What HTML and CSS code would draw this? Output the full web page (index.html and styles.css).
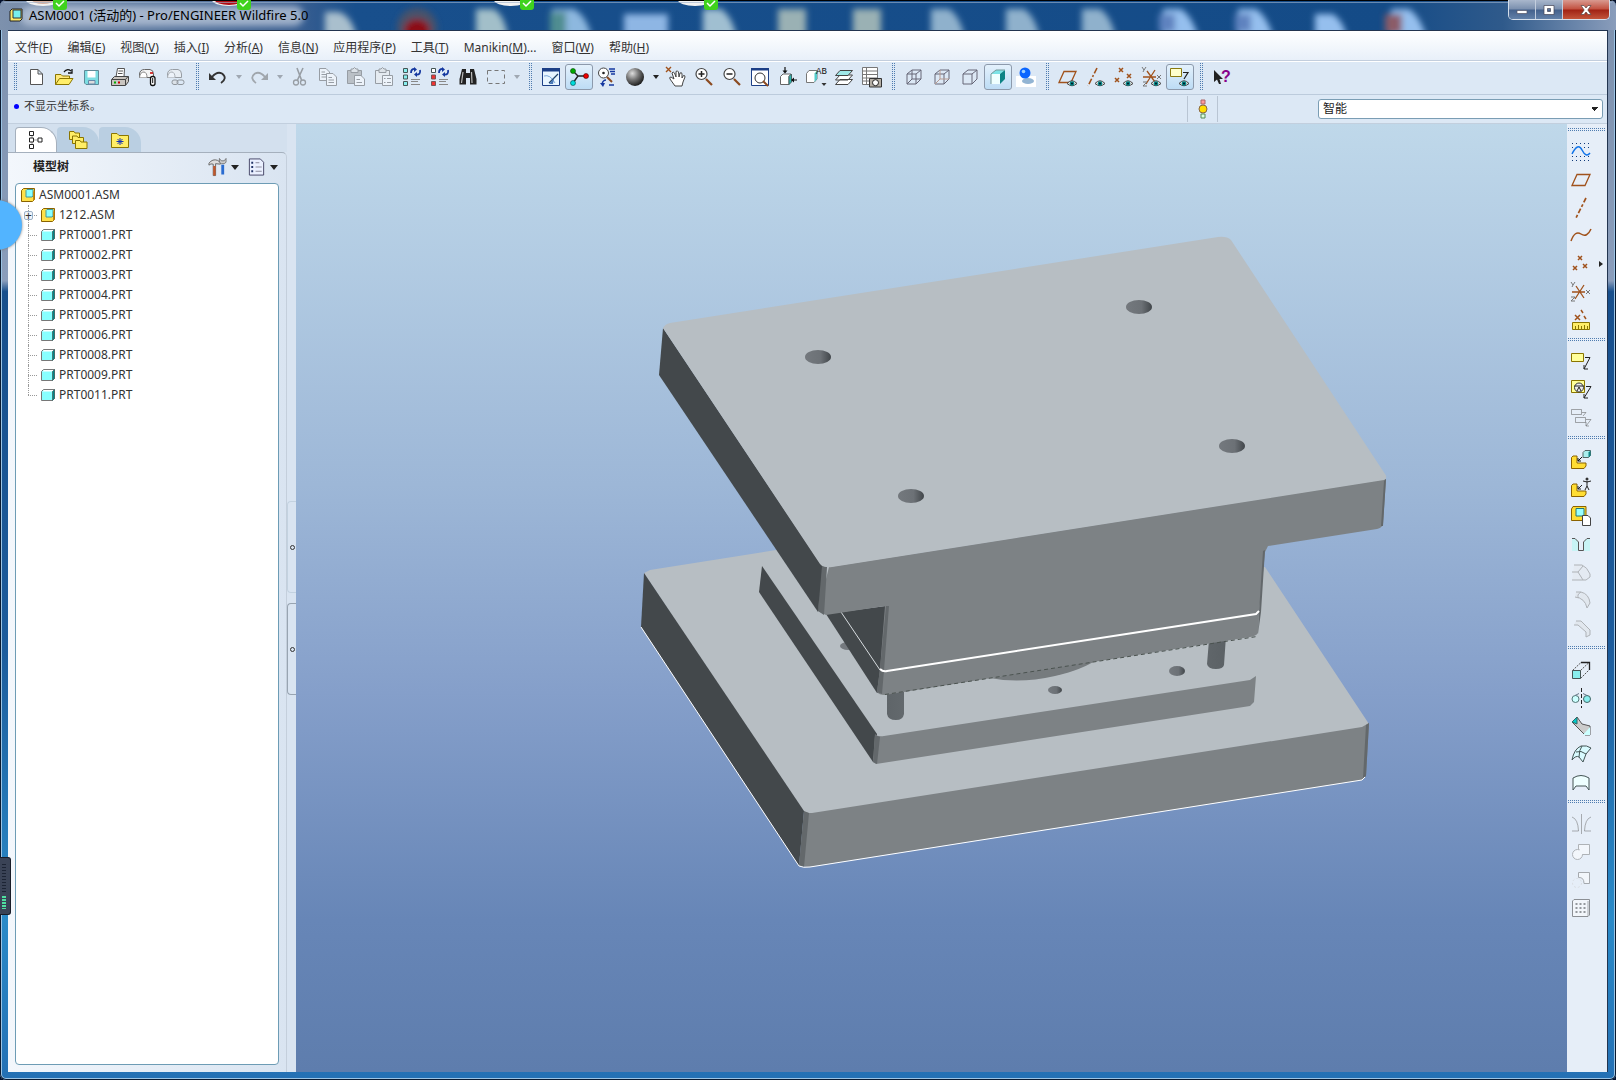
FILE: index.html
```html
<!DOCTYPE html>
<html lang="zh-CN">
<head>
<meta charset="utf-8">
<title>ASM0001 (活动的) - Pro/ENGINEER Wildfire 5.0</title>
<link rel="stylesheet" href="styles.css">
</head>
<body>
<svg class="defs" aria-hidden="true">
  <defs>
    <symbol id="part" viewBox="0 0 14 14"><path d="M.5 3.500 2.500 1.500H13.500V10.500L11.500 12.500H.5z" fill="#8ff" stroke="#777"/><path d="M1.500 3.500 3 2H13L11.500 3.500z" fill="#fff"/><path d="M11.500 3.500 13.500 1.500V10.500L11.500 12.500z" fill="#088" stroke="#466" stroke-width=".8"/></symbol>
    <symbol id="asm" viewBox="0 0 14 14"><path d="M.5 2.500 2.500 .5H13.500V11.500L11.500 13.500H.5z" fill="#ffe14a" stroke="#8a6200"/><path d="M5 2.500 6 1.500H12V8L11 9H5z" fill="#8ff" stroke="#499"/><path d="M12 13V4l1.500-2v9.500z" fill="#c88a10"/></symbol>
    <symbol id="eye" viewBox="0 0 10 7"><path d="M0 3.500Q5-2 10 3.500Q5 8 0 3.500z" fill="#ddd" stroke="#444"/><circle cx="5" cy="3.500" r="2.300" fill="#088"/><circle cx="5" cy="3.500" r="1" fill="#012"/></symbol>
    <symbol id="check" viewBox="0 0 14 12"><path d="M0 0H14V9Q14 12 11 12H3Q0 12 0 9z" fill="#3fd21d"/><path d="M3 5 6 8 11 3" fill="none" stroke="#fff" stroke-width="1.500"/></symbol>
    <symbol id="cube" viewBox="0 0 20 20"><path d="M3 7 8 3H17V12L12 17H3z" fill="none" stroke="#667"/></symbol>
  </defs>
</svg>

<div class="window">
  <header class="titlebar">
    <svg class="glass" aria-hidden="true" viewBox="0 0 1616 31" preserveAspectRatio="xMinYMin slice">
      <defs>
        <filter id="soft" x="-30%" y="-50%" width="160%" height="200%"><feGaussianBlur stdDeviation="3"/></filter>
        <linearGradient id="bar" x1="0" x2="1"><stop offset="0" stop-color="#7d91ad"/><stop offset=".18" stop-color="#3d6091"/><stop offset=".22" stop-color="#184f8c"/><stop offset=".86" stop-color="#144b87"/><stop offset=".93" stop-color="#2f5a8b"/><stop offset="1" stop-color="#8a9dbb"/></linearGradient>
      </defs>
      <rect width="1616" height="31" fill="url(#bar)"/>
      <g filter="url(#soft)">
        <rect x="20" y="6" width="284" height="20" rx="10" fill="#b6c4d8" opacity=".8"/>
        <path d="M325 40V12h14q14 5 18 28z" fill="#a9bfcd"/>
        <circle cx="417" cy="28" r="20" fill="#4a526a"/><ellipse cx="417" cy="30" rx="13" ry="11" fill="#8c0c16"/>
        <path d="M476 40V9h18q12 8 14 31z" fill="#a2bfc9"/>
        <path d="M552 40V9h22q14 8 18 31z" fill="#8db8df"/><path d="M550 40V12h16v28z" fill="#4f8d91"/>
        <path d="M624 14h44v26h-44z" fill="#8eb6e4"/>
        <path d="M703 40V9h18q12 8 16 31z" fill="#a0bfd1"/>
        <path d="M778 9h28v31h-28zM853 9h28v31h-28z" fill="#9ab1b4"/>
        <path d="M931 40V9h18q12 8 16 31zM1006 40V9h18q12 8 16 31zM1082 40V9h18q12 8 16 31z" fill="#8fb1cc"/>
        <path d="M1163 40V9h18q12 8 18 31zM1238 40V9h18q12 8 18 31zM1315 40V14h18q12 8 14 26zM1391 40V9h18q12 8 18 31z" fill="#95bfee"/>
        <path d="M1159 14h16v18h-16zM1235 14h16v18h-16z" fill="#5e83c0"/><path d="M1385 14h17v20h-17z" fill="#8b5c68"/>
      </g>
      <path d="M26 0a17 6 0 0 0 34 0zM212 0a17 6 0 0 0 34 0zM494 0a17 6 0 0 0 34 0zM678 0a17 6 0 0 0 34 0z" fill="#f2f2f2"/>
      <path d="M32 0a11 4 0 0 0 22 0z" fill="#d8b2a2"/><path d="M215 0a14 5 0 0 0 28 0z" fill="#b00b14"/>
      <path d="M0 .5H1616" stroke="#000"/><path d="M4 2.500H1612" stroke="#9fb4cf" opacity=".6"/>
      <use href="#check" x="53" y="-2" width="14" height="12"/><use href="#check" x="237" y="-2" width="14" height="12"/><use href="#check" x="520" y="-2" width="14" height="12"/><use href="#check" x="704" y="-2" width="14" height="12"/>
    </svg>
    <svg class="app-icon" viewBox="0 0 14 14" aria-hidden="true"><path d="M1 3 3 1H13V11L11 13H1z" fill="#ffe96a" stroke="#222"/><path d="M4 2H12V10H4z" fill="#7ee" stroke="#333"/></svg>
    <h1>ASM0001 (活动的) - Pro/ENGINEER Wildfire 5.0</h1>
    <div class="win-buttons">
      <button aria-label="最小化"><svg viewBox="0 0 20 14"><path d="M5 7.500H15V10.500H5z" fill="#fff" stroke="#556" stroke-width=".7"/></svg></button>
      <button aria-label="最大化"><svg viewBox="0 0 20 14"><path d="M5 2.500H15V11.500H5zM8.500 5.500V8.500H11.500V5.500z" fill="#fff" fill-rule="evenodd" stroke="#445" stroke-width=".7"/></svg></button>
      <button class="close" aria-label="关闭"><svg viewBox="0 0 20 14"><path d="M5 2.500H8L10 5 12 2.500H15L11.800 7 15 11.500H12L10 9 8 11.500H5L8.200 7z" fill="#fff" stroke="#544" stroke-width=".7"/></svg></button>
    </div>
  </header>

  <div class="client">
    <nav class="menubar">
      <button>文件(<u>F</u>)</button><button>编辑(<u>E</u>)</button><button>视图(<u>V</u>)</button><button>插入(<u>I</u>)</button><button>分析(<u>A</u>)</button><button>信息(<u>N</u>)</button><button>应用程序(<u>P</u>)</button><button>工具(<u>T</u>)</button><button>Manikin(<u>M</u>)...</button><button>窗口(<u>W</u>)</button><button>帮助(<u>H</u>)</button>
    </nav>

    <div class="toolbar" role="toolbar">
      <span class="grip"></span>
      <button aria-label="新建"><svg viewBox="0 0 20 20"><path d="M4.500 2.500H12L16.500 7V17.500H4.500zM12 2.500V7H16.500" fill="#fff" stroke="#555"/></svg></button>
      <button aria-label="打开"><svg viewBox="0 0 20 20"><path d="M1.500 17.500V7.500H7L8.500 9H15.500V11" fill="#ffe97a" stroke="#8a7500"/><path d="M1.500 17.500 5.500 11.500H19L15 17.500z" fill="#ffee6a" stroke="#8a7500"/><path d="M10 5Q13 1 17 4M18 2V6H14" fill="none" stroke="#111" stroke-width="1.300"/></svg></button>
      <button aria-label="保存"><svg viewBox="0 0 20 20"><path d="M2.500 3.500H16.500V17.500H4L2.500 16z" fill="#7cdde2" stroke="#5e8b98"/><path d="M5.500 4H13.500V10.500H5.500z" fill="#fff"/><path d="M6.500 13.500H13V17H6.500z" fill="#ddd" stroke="#68a"/></svg></button>
      <button aria-label="打印"><svg viewBox="0 0 20 20"><path d="M6 10 7.500 1.500H14.500L14 10z" fill="#fff" stroke="#555"/><path d="M8.500 4H13M8 6.500H12.500" stroke="#555"/><path d="M1.500 12.500 4.500 9.500H18.500V14.500L15.500 18.500H1.500z" fill="#c9c5c0" stroke="#444"/><path d="M2 12.500H15.500L18 9.500M15.500 12.500V18" fill="none" stroke="#444"/><path d="M4 15.500H6" stroke="#0a0" stroke-width="2"/><path d="M8 15.500H10" stroke="#c00" stroke-width="2"/></svg></button>
      <button aria-label="发送邮件"><svg viewBox="0 0 20 20"><path d="M1.500 10.500V7Q2 2.500 6.500 2.500H12Q15.500 3 15.500 7V10.500z" fill="#f4f4f4" stroke="#666"/><path d="M1.500 10.500Q2 5 6 5Q9 5.500 9 10.500" fill="#fff" stroke="#888"/><path d="M12 6H15" stroke="#c00" stroke-width="1.500"/><rect x="12.500" y="9.500" width="4.500" height="9" rx="2" fill="#fff" stroke="#111" stroke-width="1.300"/><path d="M14.700 11V16" stroke="#111"/></svg></button>
      <button class="off" aria-label="发送链接"><svg viewBox="0 0 20 20"><path d="M1.500 10.500V7Q2 2.500 6.500 2.500H12Q15.500 3 15.500 7V10.500z" fill="#f4f4f4" stroke="#555"/><path d="M1.500 10.500Q2 5 6 5Q9 5.500 9 10.500" fill="#fff" stroke="#777"/><rect x="6" y="13" width="6" height="4.500" rx="2" fill="#ddd" stroke="#444"/><rect x="11" y="13" width="7" height="4.500" rx="2" fill="none" stroke="#444"/></svg></button>
      <span class="grip"></span>
      <button aria-label="撤消"><svg viewBox="0 0 20 20"><path d="M4 10Q9 4 14 6.500Q20 11 13 16" fill="none" stroke="#333" stroke-width="1.800"/><path d="M1 6V13H8z" fill="#333"/></svg></button><button class="arrow off" aria-label="撤消列表"></button>
      <button class="off" aria-label="重做"><svg viewBox="0 0 20 20"><path d="M16 10Q11 4 6 6.500Q0 11 7 16" fill="none" stroke="#666" stroke-width="1.800"/><path d="M19 6V13H12z" fill="#666"/></svg></button><button class="arrow off" aria-label="重做列表"></button>
      <button class="off" aria-label="剪切"><svg viewBox="0 0 20 20"><path d="M7 1 11.500 13M13 1 7.500 13" stroke="#555" stroke-width="1.600"/><circle cx="6" cy="15.500" r="2.500" fill="none" stroke="#555" stroke-width="1.300"/><circle cx="13" cy="15.500" r="2.500" fill="none" stroke="#555" stroke-width="1.300"/></svg></button>
      <button class="off" aria-label="复制"><svg viewBox="0 0 20 20"><path d="M1.500 1.500H8L11.500 5V13.500H1.500zM3.500 5H7M3.500 7.500H9M3.500 10H9" fill="#fff" stroke="#555"/><path d="M8.500 6.500H15L18.500 10V18.500H8.500zM10.500 10.500H14M10.500 13H16M10.500 15.500H16" fill="#fff" stroke="#555"/></svg></button>
      <button class="off" aria-label="粘贴"><svg viewBox="0 0 20 20"><path d="M1.500 3.500H15.500V16.500H1.500z" fill="#999" stroke="#555"/><path d="M5 2H7Q8.500-1 10 2H12V5.500H5z" fill="#ddd" stroke="#555"/><path d="M8.500 8.500H15L18.500 12V18.500H8.500zM10.500 12.500H14M10.500 15.500H16" fill="#fff" stroke="#555"/></svg></button>
      <button class="off" aria-label="选择性粘贴"><svg viewBox="0 0 20 20"><path d="M1.500 3.500H15.500V16.500H1.500z" fill="#eee" stroke="#555"/><path d="M5 2H7Q8.500-1 10 2H12V5.500H5z" fill="#ddd" stroke="#555"/><path d="M8.500 8.500H18.500V18.500H8.500zM13 11.500H17M13 15.500H17M10 11.500H11.500M10 15.500H11.500" fill="#fff" stroke="#555"/></svg></button>
      <button aria-label="再生"><svg viewBox="0 0 20 20"><path d="M1.500 1.500H5.500V5.500H1.500zM1.500 8H5.500V12H1.500zM1.500 14.500H5.500V18.500H1.500z" fill="#8ee" stroke="#455"/><path d="M9 6Q9 1.500 13 2M18 3Q19 8 14 7.500" fill="none" stroke="#1538a0" stroke-width="1.800"/><path d="M12 0 15 2.500 12 5zM15 5 12 7.500 15 10z" fill="#1538a0"/><path d="M9 12.500H18M9 14.500H16M9 17.500H18" stroke="#888"/></svg></button>
      <button aria-label="再生管理器"><svg viewBox="0 0 20 20"><path d="M1.500 1.500H5.500V5.500H1.500z" fill="#fff" stroke="#455"/><path d="M1.500 8H5.500V12H1.500zM1.500 14.500H5.500V18.500H1.500z" fill="#e33" stroke="#755"/><path d="M9 6Q9 1.500 13 2M18 3Q19 8 14 7.500" fill="none" stroke="#1538a0" stroke-width="1.800"/><path d="M12 0 15 2.500 12 5zM15 5 12 7.500 15 10z" fill="#1538a0"/><path d="M9 12.500H18M9 14.500H16M9 17.500H18" stroke="#888"/></svg></button>
      <button aria-label="查找"><svg viewBox="0 0 20 20"><path d="M4 2H8V6H12V2H16L18.500 12V17.500H12V11H8V17.500H1.500V12z" fill="#222"/><path d="M5 5 3.500 16M13.500 5 14 16" stroke="#bbb" stroke-width="1.200"/></svg></button>
      <button aria-label="选取框"><svg viewBox="0 0 20 20"><path d="M1.500 3.500H18.500V16.500H1.500z" fill="none" stroke="#777" stroke-dasharray="4 3"/></svg></button><button class="arrow off" aria-label="选取框列表"></button>
      <span class="grip"></span>
      <button aria-label="重画"><svg viewBox="0 0 20 20"><path d="M1.500 1.500H18.500V18.500H1.500z" fill="#e8f5ff" stroke="#1c3f86"/><path d="M1 1H19V4.500H1z" fill="#1c3f86"/><path d="M3 9Q9 7 14 16" fill="none" stroke="#7aa6d8"/><path d="M8 16 17 7" stroke="#246" stroke-width="1.200"/><path d="M13 11 8 17H12z" fill="#4878b8"/></svg></button>
      <button class="on" aria-label="旋转中心"><svg viewBox="0 0 20 20"><path d="M4 4 9 9H17M9 9 4 16" fill="none" stroke="#222" stroke-width="1.400"/><circle cx="4" cy="4" r="2.500" fill="#0a0" stroke="#040" stroke-width=".6"/><circle cx="17" cy="9" r="2.500" fill="#e00" stroke="#400" stroke-width=".6"/><circle cx="4" cy="16" r="2.500" fill="#0dd" stroke="#044" stroke-width=".6"/></svg></button>
      <button aria-label="定向模式"><svg viewBox="0 0 20 20"><circle cx="6.500" cy="6" r="5" fill="#fff" stroke="#444"/><circle cx="6.500" cy="6" r="1.300" fill="#222"/><path d="M10 10 15 15" stroke="#8b4a20" stroke-width="2"/><path d="M12 2H18M13 4.500H18M14 7H18M5 17Q6 13 9 13M12 18H17" stroke="#1538a0" stroke-width="1.400" fill="none"/><path d="M3 16H8L6 20z" fill="#1538a0"/></svg></button>
      <button aria-label="外观库"><svg viewBox="0 0 20 20"><defs><radialGradient id="ball" cx=".35" cy=".3" r=".7"><stop offset="0" stop-color="#ddd"/><stop offset=".5" stop-color="#777"/><stop offset="1" stop-color="#222"/></radialGradient></defs><circle cx="10" cy="10" r="9" fill="url(#ball)"/></svg></button><button class="arrow" aria-label="外观列表"></button>
      <button aria-label="平移"><svg viewBox="0 0 20 20"><path d="M0 0 5 5M5 0 0 5" stroke="#a0521c" stroke-width="1.400"/><path d="M9 19 4 12Q3 10 5 10L8 12 6 6Q7 4 8.500 6L10 10 10 4.500Q11.500 3 12.500 5L13 10 14 6Q16 5 16 7V11L17.500 8.500Q19 8 19 10L17 15 16 19z" fill="#fff" stroke="#444"/></svg></button>
      <button aria-label="放大"><svg viewBox="0 0 20 20"><circle cx="7.500" cy="7" r="5.500" fill="#fff" stroke="#444" stroke-width="1.200"/><path d="M12 12 18 18" stroke="#8b4a20" stroke-width="2.200"/><path d="M4.500 7H10.500M7.500 4V10" stroke="#222" stroke-width="1.500"/></svg></button>
      <button aria-label="缩小"><svg viewBox="0 0 20 20"><circle cx="7.500" cy="7" r="5.500" fill="#fff" stroke="#444" stroke-width="1.200"/><path d="M12 12 18 18" stroke="#8b4a20" stroke-width="2.200"/><path d="M4.500 7H10.500" stroke="#222" stroke-width="1.500"/></svg></button>
      <button aria-label="重新调整"><svg viewBox="0 0 20 20"><path d="M1.500 1.500H18.500V18.500H1.500z" fill="#fff" stroke="#1c3f86"/><path d="M1 1H19V3.500H1z" fill="#1c3f86"/><circle cx="10" cy="11" r="5" fill="#fff" stroke="#333"/><path d="M13 14 18 19" stroke="#8b4a20" stroke-width="2"/></svg></button>
      <button aria-label="重定向"><svg viewBox="0 0 20 20"><path d="M2.500 9.500 5 7H13L11 9.500V17.500H2.500z" fill="#fff" stroke="#666"/><path d="M11 9.500 13.500 7V15L11 17.500z" fill="#2bb5ae" stroke="#466"/><path d="M7 0V5M19 13H14" stroke="#111" stroke-width="1.200"/><path d="M4.500 3.500H9.500L7 6.500zM16 10.500V15.500L13 13z" fill="#111"/></svg></button>
      <button aria-label="已保存视图"><svg viewBox="0 0 20 20"><path d="M.5 6.500 3 3.500H11V12L8 15.500H.5z" fill="#fff" stroke="#777"/><path d="M8.500 6.500 11 3.500V12L8.500 15z" fill="#5cc"/><path d="M15.500 16H20.500L18 19z" fill="#333"/><text x="10" y="7" class="tiny">AB</text></svg></button>
      <button aria-label="层"><svg viewBox="0 0 20 20"><path d="M1.500 17.500 6 12.500H18.500L14 17.500zM1.500 13 6 8H18.500L14 13z" fill="#fff" stroke="#444"/><path d="M1.500 8.500 6 3.500H18.500L14 8.500z" fill="#9fe8e8" stroke="#444"/></svg></button>
      <button aria-label="视图管理器"><svg viewBox="0 0 20 20"><path d="M.5 .5H15.500V17.500H.5zM.5 4H15.500M.5 7.500H15.500M.5 11H15.500M.5 14H10M4.500 .5V17.500" fill="#fff" stroke="#777"/><path d="M7.500 11.500H19.500V20H7.500z" fill="#b5afa6" stroke="#333"/><circle cx="13.500" cy="15.700" r="3" fill="#fff" stroke="#222"/></svg></button>
      <span class="grip"></span>
      <button aria-label="线框"><svg viewBox="0 0 20 20"><use href="#cube"/><path d="M3 7H12V17M12 7 17 3M8 3V12H17M8 12 3 17" fill="none" stroke="#667"/></svg></button>
      <button aria-label="隐藏线"><svg viewBox="0 0 20 20"><use href="#cube"/><path d="M3 7H12V17M12 7 17 3" fill="none" stroke="#667"/><path d="M8 3V12H17M8 12 3 17" fill="none" stroke="#b79a90"/></svg></button>
      <button aria-label="消隐"><svg viewBox="0 0 20 20"><use href="#cube"/><path d="M3 7H12V17M12 7 17 3" fill="none" stroke="#667"/></svg></button>
      <button class="on" aria-label="着色"><svg viewBox="0 0 20 20"><path d="M3 7H12V17H3z" fill="#efffff"/><path d="M3 7 8 3H17L12 7z" fill="#7de3e6"/><path d="M12 7 17 3V12L12 17z" fill="#0d8385"/><path d="M3 17V7L8 3H17" fill="none" stroke="#799"/></svg></button>
      <button aria-label="增强的真实感"><svg viewBox="0 0 20 20"><path d="M0 9H20V20H0z" fill="#fff"/><ellipse cx="12" cy="14" rx="6" ry="3" fill="#92b4d3"/><circle cx="9" cy="6" r="5.500" fill="#0b66ff"/><circle cx="7.500" cy="4.500" r="1.800" fill="#9cd0ff"/></svg></button>
      <span class="grip"></span>
      <button aria-label="基准平面显示"><svg viewBox="0 0 20 20"><path d="M1 15.500 6 4.500H18L13 15.500z" fill="none" stroke="#a0521c" stroke-width="1.300"/><use href="#eye" x="9" y="13" width="10" height="7"/></svg></button>
      <button aria-label="基准轴显示"><svg viewBox="0 0 20 20"><path d="M11 1 2 19" stroke="#a0521c" stroke-width="1.600" stroke-dasharray="6 2 2 2"/><use href="#eye" x="9" y="13" width="10" height="7"/></svg></button>
      <button aria-label="基准点显示"><svg viewBox="0 0 20 20"><path d="M5 1 9 5M9 1 5 5M13 7 17 11M17 7 13 11M1 11 5 15M5 11 1 15" stroke="#a0521c" stroke-width="1.500"/><use href="#eye" x="9" y="13" width="10" height="7"/></svg></button>
      <button aria-label="坐标系显示"><svg viewBox="0 0 20 20"><path d="M1 10H14M4 17 13 3M5 4 13 15" stroke="#a0521c" stroke-width="1.300"/><path d="M0 0 2 3 4 0M2 3 1 5M15 8 19 12M19 8 15 12M1 15H5L1 19H5" stroke="#777" fill="none"/><use href="#eye" x="9" y="13" width="10" height="7"/></svg></button>
      <button class="on" aria-label="注释元素显示"><svg viewBox="0 0 20 20"><path d="M.5 1.500H11.500V9.500H.5z" fill="#ffc" stroke="#8a7a10"/><path d="M13 5.500H18L14 12" fill="none" stroke="#222" stroke-width="1.200"/><use href="#eye" x="9" y="13" width="10" height="7"/></svg></button>
      <span class="grip"></span>
      <button aria-label="上下文帮助"><svg viewBox="0 0 20 20"><path d="M2 3V15L5 12.500 7 17H9L7.500 12H11z" fill="#222"/><text x="9" y="15" class="query">?</text></svg></button>
    </div>

    <div class="status">
      <p>不显示坐标系。</p>
      <span class="light"><svg viewBox="0 0 12 20" aria-hidden="true"><path d="M4 1H8V5H4z" fill="#f99" stroke="#a66"/><circle cx="6" cy="10" r="4" fill="#fd0" stroke="#864"/><path d="M4 15H8V19H4z" fill="#dfd" stroke="#585"/></svg></span>
      <select class="filter" aria-label="选取过滤器"><option>智能</option></select>
    </div>

    <main class="work">
      <aside class="sidebar">
        <section class="panel">
          <div class="tabs" role="tablist">
            <button class="tab current" role="tab" aria-label="模型树"><svg viewBox="0 0 20 20"><path d="M6 4V16M6 10H13" stroke="#999"/><path d="M3.500 1.500H7.500V5.500H3.500zM3.500 8H7.500V12H3.500zM3.500 14.500H7.500V18.500H3.500zM12 8H16V12H12z" fill="#fff" stroke="#222"/></svg></button>
            <button class="tab" role="tab" aria-label="文件夹浏览器"><svg viewBox="0 0 20 20"><g fill="#fe6" stroke="#8a7500"><path d="M1.500 9.500V1.500H6L7 3H11.500V9.500z"/><path d="M4.500 13.500V6H9L10 7.500H15.500V13.500z"/><path d="M7.500 18.500V10.500H12L13 12H19V18.500z"/></g></svg></button>
            <button class="tab" role="tab" aria-label="收藏夹"><svg viewBox="0 0 20 20"><path d="M1.500 17.500V3.500H7L9 5.500H18.500V17.500z" fill="#fe6" stroke="#8a7500"/><path d="M10 8V15M6.500 11.500H13.500M7.500 9 12.500 14M12.500 9 7.500 14" stroke="#1533b5"/></svg></button>
          </div>
          <div class="panel-body">
            <div class="panel-head">
              <h2>模型树</h2>
              <button class="menu" aria-label="设置"><svg viewBox="0 0 20 20"><path d="M1 6Q5 1 10 3L13 5V7L8 6.500V19H5.500V7Q3 6 1 8z" fill="#ddd" stroke="#666"/><path d="M5.500 9H8V19H5.500z" fill="#c0572a"/><path d="M12 1V5L14 6.500H17L19 5V1L17 3.500H14z" fill="#ccc" stroke="#666" stroke-width=".8"/><path d="M14 7.500H17V18H14z" fill="#2a6cd0"/></svg></button>
              <button class="menu" aria-label="显示"><svg viewBox="0 0 20 20"><path d="M2.500 1.500H14L17.500 5V18.500H2.500z" fill="#eaf0ff" stroke="#446"/><path d="M4.500 5.500H6.500M4.500 10H6.500M4.500 14.500H6.500" stroke="#236" stroke-width="2"/><path d="M9 5.500H13M9 10H15.500M9 14.500H15.500" stroke="#889"/></svg></button>
            </div>
            <div class="tree">
              <div class="node"><svg aria-hidden="true"><use href="#asm"/></svg>ASM0001.ASM</div>
              <ul>
                <li><button class="expand" aria-label="展开">+</button><svg aria-hidden="true"><use href="#asm"/></svg>1212.ASM</li>
                <li><svg aria-hidden="true"><use href="#part"/></svg>PRT0001.PRT</li>
                <li><svg aria-hidden="true"><use href="#part"/></svg>PRT0002.PRT</li>
                <li><svg aria-hidden="true"><use href="#part"/></svg>PRT0003.PRT</li>
                <li><svg aria-hidden="true"><use href="#part"/></svg>PRT0004.PRT</li>
                <li><svg aria-hidden="true"><use href="#part"/></svg>PRT0005.PRT</li>
                <li><svg aria-hidden="true"><use href="#part"/></svg>PRT0006.PRT</li>
                <li><svg aria-hidden="true"><use href="#part"/></svg>PRT0008.PRT</li>
                <li><svg aria-hidden="true"><use href="#part"/></svg>PRT0009.PRT</li>
                <li><svg aria-hidden="true"><use href="#part"/></svg>PRT0011.PRT</li>
              </ul>
            </div>
          </div>
        </section>
        <div class="splitter"><button class="flat" aria-label="折叠树"></button><button aria-label="折叠浏览器"></button></div>
      </aside>

      <div class="viewport">
        <svg viewBox="296 124 1271 948" role="img" aria-label="模具装配">
          <defs>
            <linearGradient id="pin" x1="0" x2="1"><stop offset="0" stop-color="#5f6569"/><stop offset=".5" stop-color="#868c90"/><stop offset="1" stop-color="#5b6165"/></linearGradient>
            <linearGradient id="hole" x1="0" x2="1"><stop offset="0" stop-color="#74797e"/><stop offset=".6" stop-color="#6c7176"/><stop offset="1" stop-color="#41464a"/></linearGradient>
          </defs>
          <path d="M644 573 650 570 776 550 1265 567 1367 721Q1370 725 1366 727L812 816 800 811z" fill="#b7bec3"/>
          <path d="M644 573 641 627 799 866 804 811z" fill="#43484b"/>
          <path d="M804 811Q805 813 812 813L1362 727 1369 723 1366 776 1362 780 808 867 799 866z" fill="#7d8285"/>
          <path d="M804 811 809 813 804 867 799 865zM1366 725 1369 723 1366 776 1363 778z" fill="#63686b"/>
          <path d="M641 627 799 866Q803 868 810 867L1362 780 1365 777" fill="none" stroke="#fff"/>
          <path d="M762 566 877 734 873 762 759 592z" fill="#43484b"/>
          <path d="M875 734Q877 737 884 736L1250 680 1256 676 1254 702 1250 706 876 764 873 762z" fill="#7d8285"/>
          <path d="M875 735 880 737 877 764 873 762z" fill="#63686b"/>
          <ellipse cx="1055" cy="690" rx="7" ry="4" fill="url(#hole)"/><ellipse cx="1177" cy="671" rx="8" ry="5" fill="url(#hole)"/><ellipse cx="848" cy="646" rx="8" ry="4" fill="#74797e"/>
          <path d="M990 678Q1020 684 1055 676Q1084 669 1096 660z" fill="#767b7e"/>
          <path d="M887 690V714Q888 720 896 720Q903 720 904 714V688zM1209 640 1207 664Q1208 669 1216 669Q1223 669 1224 665L1226 636z" fill="url(#pin)"/>
          <path d="M826 614 886 606 880 692 877 693z" fill="#43484b"/>
          <path d="M841 612 880 670" stroke="#d7dcdf" fill="none"/>
          <path d="M829 567 1386 479 1383 524Q1382 528 1377 529L1268 546 1265 552 1259 613 1258 633Q1256 636 1250 637L885 695Q879 695 877 692L880 669 885 606 826 615 818 611z" fill="#7d8285"/>
          <path d="M886 606 889 606 884 670 882 694 877 692 880 669zM1265 550 1261 612 1258 634 1259 612 1263 551zM1384 481 1386 479 1383 526 1381 526zM820 565 827 567 824 615 818 611z" fill="#63686b"/>
          <path d="M880 669Q883 672 887 671L1256 614 1259 611" fill="none" stroke="#fff" stroke-width="2"/>
          <path d="M885 694.500 1257 636.500" stroke="#4b5350" stroke-dasharray="4 3"/>
          <path d="M663 328 659 375 818 612 822 566z" fill="#43484b"/>
          <path d="M663 328Q665 324 670 323L1218 237Q1227 236 1231 240L1385 474Q1388 478 1384 480L832 567Q824 568 820 564z" fill="#b7bec3"/>
          <g fill="url(#hole)"><ellipse cx="818" cy="357" rx="13" ry="7"/><ellipse cx="1139" cy="307" rx="13" ry="7"/><ellipse cx="1232" cy="446" rx="13" ry="7"/><ellipse cx="911" cy="496" rx="13" ry="7"/></g>
        </svg>
      </div>

      <div class="toolbox" role="toolbar">
        <span class="grip"></span>
        <button aria-label="草绘"><svg viewBox="0 0 20 20"><path d="M1 1.500H20M1 5.500H20M1 14.500H20M1 18.500H20" stroke="#113a7a" stroke-dasharray="1 3"/><path d="M1 12Q7 0 11 8T19 11" fill="none" stroke="#1274e8" stroke-width="1.500"/></svg></button>
        <button aria-label="平面"><svg viewBox="0 0 20 20"><path d="M1 15.500 6 4.500H19L14 15.500z" fill="none" stroke="#a0521c" stroke-width="1.300"/></svg></button>
        <button aria-label="轴"><svg viewBox="0 0 20 20"><path d="M15 0 5 20" stroke="#a0521c" stroke-width="1.700" stroke-dasharray="5 2 3 2"/></svg></button>
        <button aria-label="曲线"><svg viewBox="0 0 20 20"><path d="M0 15Q4 4 10 8T20 3" fill="none" stroke="#a0521c" stroke-width="1.500"/></svg></button>
        <button class="more" aria-label="点"><svg viewBox="0 0 20 20"><path d="M7 2 11 6M11 2 7 6M2 12 6 16M6 12 2 16M12 10 16 14M16 10 12 14" stroke="#a0521c" stroke-width="1.500"/></svg></button>
        <button aria-label="坐标系"><svg viewBox="0 0 20 20"><path d="M1 10H14M4 17 13 3M5 4 13 16" stroke="#a0521c" stroke-width="1.300"/><path d="M0 0 2 3 4 0M2 3 1 5M15 8 19 12M19 8 15 12M0 15H4L0 19H4" stroke="#777" fill="none"/></svg></button>
        <button aria-label="分析"><svg viewBox="0 0 20 20"><path d="M4 5 9 10M9 5 4 10M10 0 12 3M13 6 15 9" stroke="#a0521c" stroke-width="1.500"/><path d="M1.500 12.500H18.500V19.500H1.500z" fill="#fe6" stroke="#8a7500"/><path d="M4.500 19V16M7.500 19V15M10.500 19V16M13.500 19V15M16.500 19V16" stroke="#8a7500"/></svg></button>
        <span class="grip"></span>
        <button aria-label="注释"><svg viewBox="0 0 20 20"><path d="M.5 1.500H12.500V9.500H.5z" fill="#ff9" stroke="#8a7500"/><path d="M14 5.500H19L13 17M13 13V17H17" fill="none" stroke="#222"/></svg></button>
        <button aria-label="符号"><svg viewBox="0 0 20 20"><path d="M.5 .5H13.500V12.500H.5z" fill="#ff9" stroke="#8a7500"/><circle cx="8" cy="7.500" r="4.500" fill="#eee" stroke="#333"/><path d="M3.500 6H12.500M6 11 8 7 10 11M15 6.500H20L13 18M13 14V18H17" fill="none" stroke="#222"/></svg></button>
        <button class="off" aria-label="注释组"><svg viewBox="0 0 20 20"><path d="M.5 1.500H10.500V6.500H.5zM4.500 9.500H14.500V14.500H4.500zM11 4.500H15L12 8M15 11.500H20L15 18M15 14V18H18" fill="none" stroke="#555"/></svg></button>
        <span class="grip"></span>
        <button aria-label="装配"><svg viewBox="0 0 20 20"><path d="M.5 7.500 2 6H6V13H15V16L13 18.500H.5z" fill="#fd3" stroke="#8a6200"/><path d="M12 2.500 14 .5H19.500V5.500L17.500 7.500H12z" fill="#aee" stroke="#566"/><path d="M17.500 2.500 19.500 .5V5.500L17.500 7.500z" fill="#188"/><path d="M11 7 7 11M7 8V11H10" stroke="#111" fill="none"/></svg></button>
        <button aria-label="人体模型"><svg viewBox="0 0 20 20"><path d="M.5 7.500 2 6H6V13H15V16L13 18.500H.5z" fill="#fd3" stroke="#8a6200"/><circle cx="16" cy="1" r="1.500" fill="#333"/><path d="M12 3 16 4 20 3M16 3V8L14 12M16 8 18 12M11 7 7 11M7 8V11H10" stroke="#222" fill="none"/></svg></button>
        <button aria-label="创建元件"><svg viewBox="0 0 20 20"><path d="M.5 3 2 .5H15V12L13 14.500H.5z" fill="#fd3" stroke="#8a6200"/><path d="M5 2.500H13V10H5z" fill="#9ff" stroke="#277"/><path d="M11.500 9.500H17L19.500 12V19.500H11.500z" fill="#fff" stroke="#444"/></svg></button>
        <button aria-label="孔"><svg viewBox="0 0 20 20"><path d="M1 5H5L7 7V17H1zM19 5H15L13 7V17H19z" fill="#c8f4f6"/><path d="M1 4.500H4L7.500 8V16.500H12.500V8L16 4.500H19" fill="none" stroke="#555"/></svg></button>
        <button class="off" aria-label="壳"><svg viewBox="0 0 20 20"><path d="M3 3H11Q16 5 19 12V15L15 18H1M1 10H7L12 18M7 10 12 4" fill="#e4e8ee" stroke="#777"/></svg></button>
        <button class="off" aria-label="倒圆角"><svg viewBox="0 0 20 20"><path d="M5 2H10Q18 4 19 13L16 18Q14 8 4 7M10 2Q5 5 8 8" fill="#dde1e6" stroke="#777"/></svg></button>
        <button class="off" aria-label="倒角"><svg viewBox="0 0 20 20"><path d="M5 3H10L19 12V17L15 19V14L7 7H3" fill="#dde1e6" stroke="#777"/></svg></button>
        <span class="grip"></span>
        <button aria-label="拉伸"><svg viewBox="0 0 20 20"><path d="M1.500 10.500H9.500V18.500H1.500z" fill="#8ee" stroke="#455"/><path d="M1.500 10.500 10 2.500M9.500 18.500 18 10M9.500 10.500 18 2.500" stroke="#555" stroke-dasharray="2 1"/><path d="M10 2.500H18.500V10" fill="none" stroke="#222" stroke-width="1.300"/></svg></button>
        <button aria-label="旋转"><svg viewBox="0 0 20 20"><path d="M10.500 0V20" stroke="#222" stroke-dasharray="4 2"/><circle cx="4.500" cy="11" r="3.500" fill="#cff" stroke="#577"/><circle cx="16" cy="11" r="3.500" fill="#8ee" stroke="#466"/><path d="M4 7.500 8 5.500M12 5.500 16 7.500" fill="none" stroke="#678"/></svg></button>
        <button aria-label="可变截面扫描"><svg viewBox="0 0 20 20"><path d="M1 6 6 1 11 8 19 10V19H14z" fill="#ccc" stroke="#555"/><path d="M1 6 6 1 6 8z" fill="#0cc" stroke="#366"/><path d="M19 11V19H12z" fill="#cff"/></svg></button>
        <button aria-label="边界混合"><svg viewBox="0 0 20 20"><path d="M1 16Q3 5 10 2Q16 1 20 4Q14 9 12 18L8 13Q5 11 1 16z" fill="#d8fbff" stroke="#455"/><path d="M5 8Q10 6 15 10M11 2Q8 6 8 13" fill="none" stroke="#455"/></svg></button>
        <button aria-label="造型"><svg viewBox="0 0 20 20"><path d="M2 18V6Q10 1 18 6V18L15 14H5z" fill="#eff" stroke="#455"/></svg></button>
        <span class="grip"></span>
        <button class="off" aria-label="镜像"><svg viewBox="0 0 20 20"><path d="M10.500 0V20M1 3Q7 5 7.500 17H1M20 3Q14 5 13.500 17H20" fill="none" stroke="#666"/></svg></button>
        <button class="off" aria-label="合并"><svg viewBox="0 0 20 20"><path d="M7.500 2.500H18.500V12.500H7.500z" fill="#fff" stroke="#777"/><circle cx="6.500" cy="12.500" r="5" fill="#fff" stroke="#777"/><path d="M8.500 8H12V12H8.500z" fill="#fff"/></svg></button>
        <button class="off" aria-label="修剪"><svg viewBox="0 0 20 20"><path d="M7.500 2.500H18.500V13.500H13Q13 7 7.500 7.500z" fill="#fff" stroke="#666"/><circle cx="6" cy="13" r="4.500" fill="none" stroke="#ccc" stroke-dasharray="2 2"/></svg></button>
        <button class="off" aria-label="阵列"><svg viewBox="0 0 20 20"><path d="M1.500 3 3 1.500H18.500V17L17 18.500H1.500z" fill="#fff" stroke="#333"/><path d="M17 3V18" stroke="#666"/><path d="M4.500 6H15M4.500 10H15M4.500 14H15" stroke="#444" stroke-width="2" stroke-dasharray="2 2"/></svg></button>
      </div>
    </main>
  </div>
  <span class="bubble"></span>
  <span class="meter"></span>
</div>
</body>
</html>
```
FILE: styles.css
```css
* { box-sizing: border-box; }
body, h1, h2, p, ul { margin: 0; padding: 0; }
body {
  font-family: "Noto Sans", "Noto Sans CJK SC", sans-serif;
  font-size: 12px;
  line-height: 20px;
  color: #333;
  background: #04102c;
}
button {
  font: inherit;
  color: inherit;
  padding: 0;
  border: 0;
  background: none;
}
.defs { position: absolute; width: 0; height: 0; }
.tiny { font: 9px "Liberation Mono", monospace; fill: #111; }
.query { font: bold 16px "Liberation Sans", sans-serif; fill: #808; }

.window {
  position: relative;
  display: flex;
  flex-direction: column;
  height: 100vh;
  padding: 0 8px 8px;
  border-radius: 6px;
  overflow: hidden;
  background: linear-gradient(#7d91ad, #8a9dbb 26%, #184f8c 27%, #1d5c9c 60%, #2a8ac8 85%, #2470b4);
  box-shadow: inset 0 0 0 1px #0a1a30, inset 0 0 0 2px #9cc4e4;
}

.titlebar {
  position: relative;
  flex: none;
  display: flex;
  align-items: flex-start;
  height: 30px;
  margin: 0 -8px;
  padding-left: 9px;
}
.glass { position: absolute; left: 0; top: 0; width: 100%; height: 30px; }
.app-icon { position: relative; width: 14px; height: 14px; margin-top: 8px; }
.titlebar h1 {
  position: relative;
  flex: 1;
  margin-left: 6px;
  font-size: 13px;
  font-weight: 400;
  line-height: 30px;
  color: #000;
}
.win-buttons {
  position: relative;
  display: flex;
  margin-right: 6px;
  border: 1px solid #d5dfeb;
  border-top: 0;
  border-radius: 0 0 5px 5px;
  overflow: hidden;
}
.win-buttons button {
  width: 27px;
  height: 19px;
  border-right: 1px solid #c3cede;
  background: linear-gradient(#a9b7cc, #7a8fae 48%, #44618c 52%, #6280a8);
}
.win-buttons svg { display: block; width: 20px; height: 14px; margin: auto; }
.win-buttons .close {
  width: 46px;
  border: 0;
  background: linear-gradient(#d99a90, #c2503f 48%, #a02214 52%, #c2543a);
}

.client {
  flex: 1;
  min-height: 0;
  display: flex;
  flex-direction: column;
  border: 1px solid #22344f;
  border-width: 1px 1px 0 0;
  background: #dfe9f6;
}
.menubar {
  flex: none;
  display: flex;
  height: 30px;
  padding: 4px 0 0;
  background: linear-gradient(#fff, #e8f0f9);
  border-bottom: 1px solid #c3cedd;
}
.menubar button { padding: 0 8px 0 7px; }
.toolbar {
  flex: none;
  display: flex;
  align-items: center;
  height: 34px;
  padding-bottom: 2px;
  border-bottom: 1px solid #bccbdc;
  border-top: 1px solid #fff;
  background: #dce8f5;
}
.toolbar button { flex: none; width: 28px; height: 26px; }
.toolbar svg, .toolbox svg { display: block; width: 20px; height: 20px; margin: auto; overflow: visible; }
.toolbar .off svg, .toolbox .off svg { opacity: .5; }
.toolbar .on {
  border: 1px solid #8d9aac;
  border-radius: 3px;
  background: linear-gradient(#e4f1fc, #bddcf5);
}
.toolbar .arrow { width: 13px; }
.arrow::before, .menu::after {
  content: "";
  display: block;
  margin: auto;
  border: 3px solid transparent;
  border-top: 4px solid #222;
  border-bottom: 0;
  width: 0;
}
.arrow.off::before { border-top-color: #a0a8b2; }
.grip { flex: none; width: 14px; height: 28px; }
.grip::before {
  content: "";
  display: block;
  width: 3px;
  height: 28px;
  margin: 0 auto;
  background: repeating-linear-gradient(transparent 0 1px, #dce8f5 1px 2px), linear-gradient(90deg, #4f7cb0 1px, transparent 1px 2px, #4f7cb0 2px);
}

.status {
  flex: none;
  display: flex;
  align-items: center;
  height: 29px;
  padding-right: 4px;
  background: #dce8f5;
  border-bottom: 1px solid #c2cfde;
}
.status p { flex: 1; display: flex; align-items: center; gap: 5px; padding: 0 0 6px 6px; font-size: 11px; line-height: 18px; }
.status p::before { content: ""; width: 5px; height: 5px; border-radius: 50%; background: #00f; }
.light { width: 31px; height: 26px; padding: 3px 0; border: 1px solid #b9c5d3; border-width: 0 1px; margin-right: 100px; }
.light svg { display: block; width: 12px; height: 20px; margin: auto; }
.filter {
  width: 285px;
  height: 20px;
  padding: 0 4px;
  font: inherit;
  line-height: 18px;
  appearance: none;
  color: #222;
  border: 1px solid #7a9db4;
  border-radius: 3px;
  background: conic-gradient(from -45deg at 50% 100%, #222 0 90deg, #fff 0) no-repeat right 4px top 7px / 6px 4px, #fff;
}

.work { flex: 1; min-height: 0; display: flex; }
.sidebar { flex: none; width: 288px; display: flex; background: #d9e4f1; }
.panel { flex: 1; display: flex; flex-direction: column; background: linear-gradient(90deg, #f3f7fc, #d9e4f1); }
.tabs { flex: none; display: flex; height: 28px; padding: 3px 0 0 7px; background: #d3e0ee; }
.tab {
  width: 42px;
  height: 25px;
  border-radius: 4px 16px 0 0;
  background: #bacfe2;
}
.tab svg, .menu svg { display: block; width: 20px; height: 20px; margin: auto; }
.tab.current { background: #fff; border: 1px solid #a5b0bd; border-bottom: 0; }
.panel-body {
  flex: 1;
  display: flex;
  flex-direction: column;
  padding: 0 7px;
  padding-bottom: 7px;
  border-top: 1px solid #a5b0bd;
  border-right: 1px solid #c4cfdc;
  border-radius: 0 5px 0 0;
}
.panel-head { display: flex; align-items: center; gap: 8px; height: 30px; padding: 0 1px 2px 18px; }
.panel-head h2 { flex: 1; font-size: 12px; line-height: 20px; color: #222; }
.menu { display: flex; align-items: center; gap: 4px; width: 31px; }
.menu::after { border-width: 4px; border-top-width: 5px; border-bottom-width: 0; }
.tree {
  flex: 1;
  padding: 1px 0 0 5px;
  border: 1px solid #6d9cb5;
  border-radius: 4px;
  background: #fff;
}
.node, .tree li { display: flex; align-items: center; gap: 4px; height: 20px; }
.tree svg { flex: none; width: 14px; height: 14px; }
.tree ul { list-style: none; padding-left: 7px; }
.tree li { position: relative; }
.tree li::before { content: ""; width: 9px; border-top: 1px dotted #999; }
.tree li::after { content: ""; position: absolute; left: 0; top: 0; height: 100%; border-left: 1px dotted #999; }
.tree li:last-child::after { height: 50%; }
.expand {
  position: absolute;
  left: -4px;
  top: 6px;
  z-index: 1;
  width: 9px;
  height: 9px;
  border: 1px solid #9db1c6;
  border-radius: 2px;
  background: #eef5fc;
  line-height: 6px;
}
.splitter { flex: none; width: 9px; display: flex; flex-direction: column; justify-content: center; gap: 10px; }
.splitter button {
  height: 92px;
  border: 1px solid #98a4b1;
  border-right: 0;
  border-radius: 4px 0 0 4px;
}
.splitter button::before { content: ""; display: block; width: 3px; height: 3px; margin: auto; border: 1px solid #333; border-radius: 50%; }
.splitter .flat { border-color: #c3d2e0; }

.viewport {
  flex: 1;
  min-width: 0;
  background: linear-gradient(#bfd8ea, #9db7d7 38%, #859fca 60%, #6786b7 84%, #5e7dad);
}
.viewport svg { display: block; width: 100%; height: 100%; }

.toolbox { flex: none; width: 40px; background: #e6eef8; }
.toolbox button { display: block; position: relative; width: 28px; height: 28px; }
.toolbox .grip { display: block; width: 40px; height: 14px; padding-top: 4px; }
.toolbox .grip::before {
  width: 38px;
  height: 3px;
  background: repeating-linear-gradient(90deg, transparent 0 1px, #e6eef8 1px 2px), linear-gradient(#4f7cb0 1px, transparent 1px 2px, #4f7cb0 2px);
}
.more::after {
  content: "";
  position: absolute;
  right: -8px;
  top: 11px;
  border: 3px solid transparent;
  border-left: 4px solid #222;
  border-right: 0;
}

.bubble { position: absolute; left: -28px; top: 200px; width: 50px; height: 50px; border-radius: 50%; background: #52b4ff; box-shadow: 0 0 3px #777; }
.meter {
  position: absolute;
  left: 0;
  top: 857px;
  width: 11px;
  height: 58px;
  border: 1px solid #181c28;
  border-left: 0;
  border-radius: 0 3px 3px 0;
  background: repeating-linear-gradient(#4fe0a0 0 2px, #3a4356 2px 3px) no-repeat 2px 38px / 4px 13px, repeating-linear-gradient(#1c2434 0 1px, #3a4356 1px 3px) no-repeat 2px 6px / 4px 30px, #3a4356;
}
```
